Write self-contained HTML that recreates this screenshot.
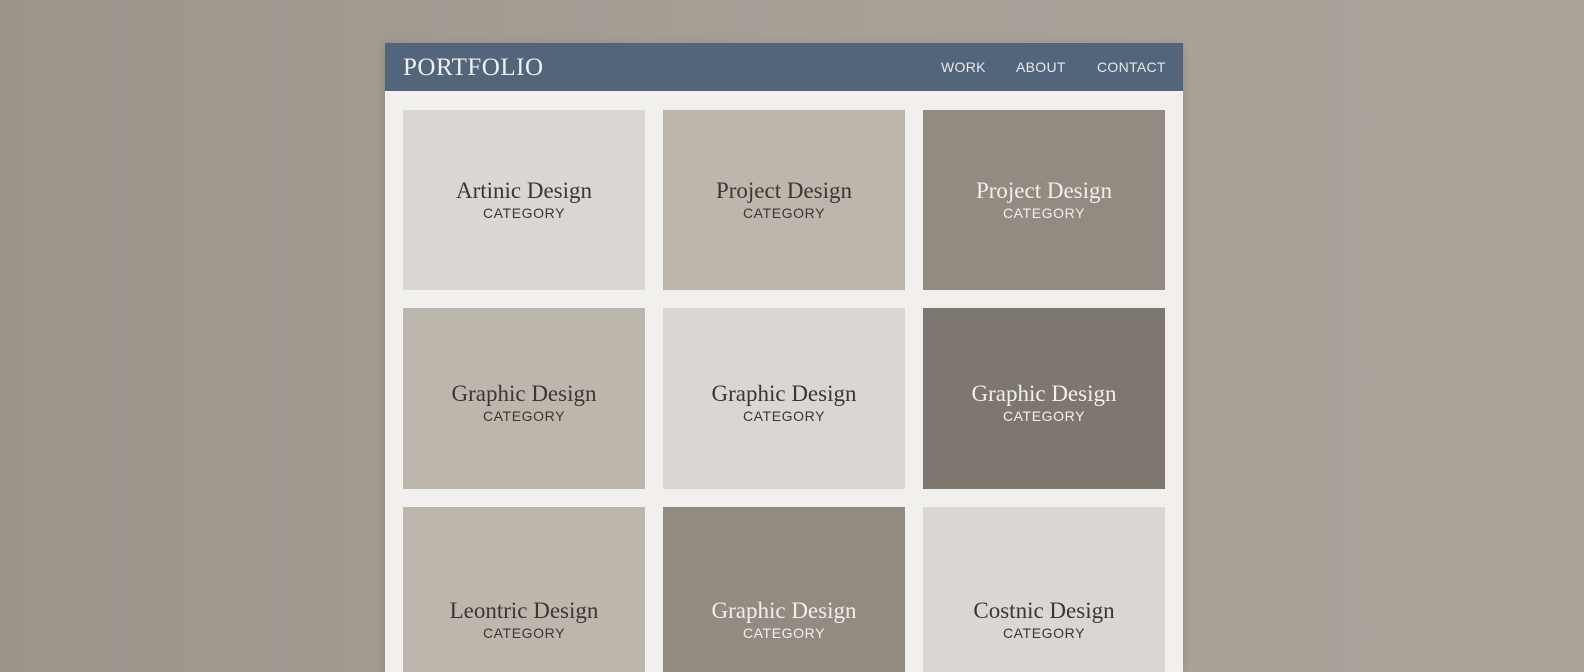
<!DOCTYPE html>
<html style="overflow:hidden"><head><style>
html,body{margin:0;width:1584px;height:672px;overflow:hidden}
body{background:linear-gradient(90deg,#9b958c,#a59f96 50%,#aaa49b);font-family:"Liberation Sans",sans-serif;position:relative}
.panel{position:absolute;left:385px;top:43px;width:798px;height:629px;background:#f1f0ec;box-shadow:0 2px 8px rgba(0,0,0,.15);overflow:hidden}
.hdr{height:48px;background:#52657a;position:relative}
.logo{position:absolute;left:18px;top:11px;font-family:"Liberation Serif",serif;font-size:25px;color:#eef0f2;letter-spacing:.5px}
.nav{position:absolute;top:16px;font-size:14px;color:#e6eaee;letter-spacing:.3px}
.card{position:absolute;width:242px;display:flex;flex-direction:column;align-items:center;justify-content:center;text-align:center;box-sizing:border-box}
.t{font-family:"Liberation Serif",serif;font-size:23px;line-height:26px}
.c{font-size:14px;letter-spacing:.6px;line-height:18px}
.L{background:#dad7d2;color:#3a3632}.M{background:#bdb6ac;color:#3a3632}.D{background:#928b82;color:#f2efea}.X{background:#7e776f;color:#f2efea}
</style></head><body>
<div class="panel">
<div class="hdr"><div class="logo">PORTFOLIO</div>
<div class="nav" style="left:556px">WORK</div><div class="nav" style="left:631px">ABOUT</div><div class="nav" style="left:712px">CONTACT</div></div>
<div class="card L" style="left:18px;top:67px;height:180px"><div class="t">Artinic Design</div><div class="c">CATEGORY</div></div>
<div class="card M" style="left:278px;top:67px;height:180px"><div class="t">Project Design</div><div class="c">CATEGORY</div></div>
<div class="card D" style="left:538px;top:67px;height:180px"><div class="t">Project Design</div><div class="c">CATEGORY</div></div>
<div class="card M" style="left:18px;top:265px;height:181px;padding-top:9px"><div class="t">Graphic Design</div><div class="c">CATEGORY</div></div>
<div class="card L" style="left:278px;top:265px;height:181px;padding-top:9px"><div class="t">Graphic Design</div><div class="c">CATEGORY</div></div>
<div class="card X" style="left:538px;top:265px;height:181px;padding-top:9px"><div class="t">Graphic Design</div><div class="c">CATEGORY</div></div>
<div class="card M" style="left:18px;top:464px;height:165px;padding-top:61px"><div class="t">Leontric Design</div><div class="c">CATEGORY</div></div>
<div class="card D" style="left:278px;top:464px;height:165px;padding-top:61px"><div class="t">Graphic Design</div><div class="c">CATEGORY</div></div>
<div class="card L" style="left:538px;top:464px;height:165px;padding-top:61px"><div class="t">Costnic Design</div><div class="c">CATEGORY</div></div>
</div>
</body></html>
